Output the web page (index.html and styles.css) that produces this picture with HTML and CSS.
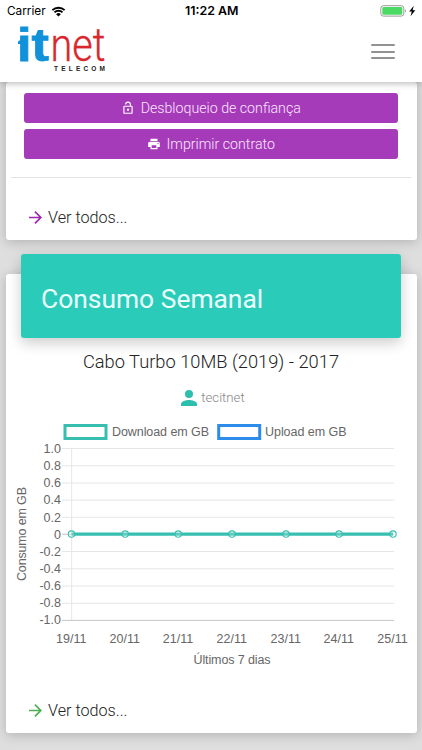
FILE: index.html
```
<!DOCTYPE html>
<html lang="pt-BR">
<head>
<meta charset="utf-8">
<meta name="viewport" content="width=device-width, initial-scale=1">
<title>itnet Telecom</title>
<link rel="stylesheet" href="styles.css">
</head>
<body>
<header class="top">
  <div class="status">
    <div class="carrier"><span class="sys">Carrier</span>
      <svg class="wifi" width="15" height="11" viewBox="0 0 16 12"><path d="M1.3 4.6a9.6 9.6 0 0 1 13.4 0M3.6 7a6.3 6.3 0 0 1 8.800 0" fill="none" stroke="#000" stroke-width="2"/><path d="M5.400 8.900a3.700 3.700 0 0 1 5.200 0L8 11.500z"/></svg>
    </div>
    <span class="clock">11:22 AM</span>
    <div class="power">
      <svg width="37" height="12" viewBox="0 0 37 12"><rect x=".8" y=".7" width="23" height="10.400" rx="2.600" fill="#fff" stroke="#999" stroke-width="1"/><rect x="2.300" y="2.100" width="20" height="7.600" rx="1.300" fill="#4cd964"/><path d="M25.200 4.200v3.400c1.200-.5 1.200-2.900 0-3.400z" fill="#999"/><path d="M33.800.8 29.200 6.500h2.600l-1.300 4.800 4.800-6.100h-2.700z"/></svg>
    </div>
  </div>
  <nav class="nav">
    <svg class="logo" width="96" height="54" viewBox="0 0 96 54" role="img" aria-label="itnet Telecom">
      <path d="M3 19.500Q6 18 6 15h4v7H3z" fill="#1191da"/>
      <text x="2" y="38.500" textLength="32" lengthAdjust="spacingAndGlyphs" class="logo-it">it</text>
      <text x="35.500" y="38.500" textLength="55" lengthAdjust="spacingAndGlyphs" class="logo-net">net</text>
      <text x="39" y="48.500" textLength="51" class="logo-sub">TELECOM</text>
    </svg>
    <button class="menu" aria-label="Menu"><span></span><span></span><span></span></button>
  </nav>
</header>
<main>
  <section class="card contract">
    <div class="actions">
      <button class="btn"><svg width="14" height="14" viewBox="0 0 24 24"><path d="M12 17a2 2 0 1 0 0-4 2 2 0 0 0 0 4zm6-9h-1V6A5 5 0 0 0 7 6h1.900a3.100 3.100 0 0 1 6.200 0v2H6a2 2 0 0 0-2 2v10a2 2 0 0 0 2 2h12a2 2 0 0 0 2-2V10a2 2 0 0 0-2-2zm0 12H6V10h12z"/></svg><span>Desbloqueio de confiança</span></button>
      <button class="btn"><svg width="14" height="14" viewBox="0 0 24 24"><path d="M19 8H5c-1.700 0-3 1.300-3 3v6h4v4h12v-4h4v-6c0-1.700-1.300-3-3-3zm-3 11H8v-5h8zm3-7a1 1 0 1 1 0-2 1 1 0 0 1 0 2zM18 3H6v4h12z"/></svg><span>Imprimir contrato</span></button>
    </div>
    <hr>
    <a class="more purple"><svg width="13" height="13" viewBox="4 4 16 16"><path d="M12 4l-1.400 1.400L16.200 11H4v2h12.200l-5.600 5.600L12 20l8-8z"/></svg><span>Ver todos...</span></a>
  </section>
  <section class="card usage">
    <h2>Consumo Semanal</h2>
    <h3>Cabo Turbo 10MB (2019) - 2017</h3>
    <p class="user"><svg width="16" height="16" viewBox="4 4 16 16"><path d="M12 12a4 4 0 1 0 0-8 4 4 0 0 0 0 8zm0 2c-2.700 0-8 1.300-8 4v2h16v-2c0-2.700-5.300-4-8-4z"/></svg><span>tecitnet</span></p>
    <svg class="chart" width="400" height="256" viewBox="11 418 400 256">
      <g fill="#fff" stroke-width="3">
        <rect x="65" y="425.500" width="41" height="13" stroke="#36bfb0"/>
        <rect x="218.700" y="425.500" width="41" height="13" stroke="#2b8ce9"/>
      </g>
      <text x="112" y="436.300" textLength="97">Download em GB</text>
      <text x="265" y="436.300" textLength="81.500">Upload em GB</text>
      <g stroke="#e6e6e6">
        <path d="M62 448.500H394M62 465.800H394M62 483H394M62 500.200H394M62 517.300H394M62 551.500H394M62 568.800H394M62 586H394M62 603.300H394M71.700 448V620"/>
        <path d="M62 534.300H394M62 620.400H394" stroke="#c4c4c4"/>
      </g>
      <g text-anchor="end">
        <text x="61" y="452.700">1.0</text><text x="61" y="470">0.8</text><text x="61" y="487.200">0.6</text><text x="61" y="504.300">0.4</text><text x="61" y="521.500">0.2</text><text x="61" y="538.700">0</text><text x="61" y="555.900">-0.2</text><text x="61" y="573.100">-0.4</text><text x="61" y="590.200">-0.6</text><text x="61" y="607.400">-0.8</text><text x="61" y="624.400">-1.0</text>
      </g>
      <g text-anchor="middle">
        <text x="71.200" y="642.500">19/11</text><text x="124.800" y="642.500">20/11</text><text x="178" y="642.500">21/11</text><text x="231.800" y="642.500">22/11</text><text x="285.700" y="642.500">23/11</text><text x="338.700" y="642.500">24/11</text><text x="392.500" y="642.500">25/11</text>
      </g>
      <text x="193.500" y="664.300" textLength="77">Últimos 7 dias</text>
      <text transform="translate(26 581) rotate(-90)" textLength="94">Consumo em GB</text>
      <path d="M71.500 534.100H393" stroke="#36bfb0" stroke-width="3.300"/>
      <g fill="#fff" fill-opacity=".2" stroke="#36bfb0" stroke-width="1.100">
        <circle cx="71.500" cy="534.100" r="3.200"/><circle cx="125.200" cy="534.100" r="3.200"/><circle cx="178.200" cy="534.100" r="3.200"/><circle cx="232" cy="534.100" r="3.200"/><circle cx="286" cy="534.100" r="3.200"/><circle cx="339" cy="534.100" r="3.200"/><circle cx="393" cy="534.100" r="3.200"/>
      </g>
    </svg>
    <a class="more green"><svg width="13" height="13" viewBox="4 4 16 16"><path d="M12 4l-1.400 1.400L16.200 11H4v2h12.200l-5.600 5.600L12 20l8-8z"/></svg><span>Ver todos...</span></a>
  </section>
</main>
</body>
</html>
```
FILE: styles.css
```
* { box-sizing: border-box; }
body { margin: 0; width: 422px; height: 750px; overflow: hidden; background: #dedede; font-family: Roboto, sans-serif; font-weight: 300; color: #222; }
.top { position: relative; z-index: 2; height: 82px; background: #fff; box-shadow: 0 2px 6px rgba(0,0,0,.25); }
.status { height: 22px; display: grid; grid-template-columns: 1fr 56px 1fr; align-items: center; }
.carrier { display: flex; align-items: center; gap: 5px; padding-left: 7px; }
.status svg { display: block; }
.sys { font: 400 11.800px/22px Inter, sans-serif; color: #000; }
.clock { margin-left: 2px; font: 600 12.400px/22px Inter, sans-serif; color: #000; white-space: nowrap; }
.power { display: flex; justify-content: flex-end; padding-right: 5px; }
.nav { height: 60px; display: flex; justify-content: space-between; padding: 0 27px 0 15px; }
.logo { display: block; overflow: visible; }
.logo-it { font: 700 46px "Liberation Sans", sans-serif; fill: #1191da; stroke: #1191da; stroke-width: .8px; }
.logo-net { font: 300 46px Roboto, sans-serif; fill: #d8272d; stroke: #d8272d; stroke-width: .3px; }
.logo-sub { font: 700 6.500px "Liberation Sans", sans-serif; fill: #222; }
.menu { width: 24px; height: 15px; margin-top: 22px; padding: 0; border: 0; background: none; display: flex; flex-direction: column; justify-content: space-between; }
.menu span { width: 100%; height: 2px; border-radius: 1px; background: #929292; }
.card { margin: 0 5.500px; background: #fff; border-radius: 3px; box-shadow: 0 2px 12px rgba(0,0,0,.2); }
.contract { height: 157.500px; padding-top: 11px; }
.actions { display: flex; flex-direction: column; gap: 5.500px; padding: 0 18.500px; }
.btn { height: 30.300px; padding: 0; border: 0; border-radius: 3px; background: #a53bb9; color: #fbe6ff; font: 300 14.200px Roboto, sans-serif; display: flex; align-items: center; justify-content: center; gap: 5.500px; }
.btn svg { fill: #fff; }
hr { height: 1.500px; margin: 17.500px 5.500px 0; border: 0; background: #e2e2e2; }
.more { display: flex; align-items: center; gap: 6px; height: 22px; padding-left: 23.500px; font-size: 16.200px; }
.contract .more { margin-top: 28px; }
.purple svg { fill: #9c27b0; }
.green svg { fill: #4caf50; }
.usage { margin-top: 34.500px; height: 459px; display: flow-root; }
h2 { margin: -20px 15.500px 0; height: 84px; padding: 5px 20px 0; display: flex; align-items: center; border-radius: 3px; background: #2bcbba; color: #eafffb; font-size: 26.400px; font-weight: 400; box-shadow: 0 5px 14px rgba(0,0,0,.2); }
h3 { margin: 12px 0 0; height: 24px; line-height: 24px; text-align: center; font-size: 18.300px; font-weight: 300; }
.user { margin: 12px 0 0; height: 24px; padding-left: 4px; display: flex; align-items: center; justify-content: center; gap: 4px; font-size: 13.200px; color: #888; }
.user svg { fill: #2dbfae; }
.user span { margin-top: -1px; }
.chart { display: block; margin: 8px 0 0 5.500px; }
.chart text { font: 12.500px "Liberation Sans", Arial, sans-serif; fill: #666; }
.usage .more { margin-top: 25px; }
```
